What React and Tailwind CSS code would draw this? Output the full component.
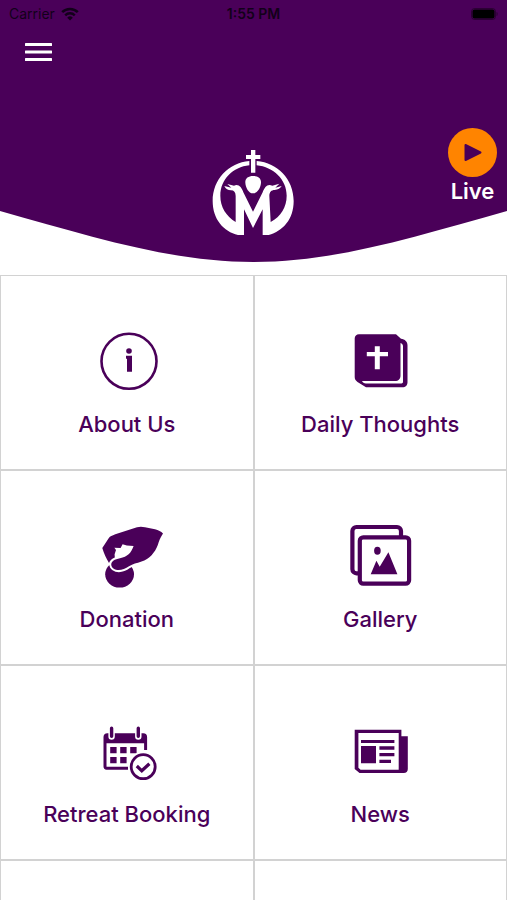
/**
 * Home Screen
 *
 * Curved header with the logo and live button, followed by the menu tiles.
 */

import React from "react";

function WifiIcon() {
  return (
    <svg viewBox="0 0 18 14" className="w-[18px] h-[14px]" fill="none" stroke="currentColor">
      <path d="M1.2 5.2a11 11 0 0 1 15.6 0" strokeWidth="2.6" />
      <path d="M4.2 8.3a6.8 6.8 0 0 1 9.6 0" strokeWidth="2.4" />
      <path d="M9 13.6 6.2 10.7a4 4 0 0 1 5.6 0z" fill="currentColor" stroke="none" />
    </svg>
  );
}

function BatteryIcon() {
  return (
    <svg viewBox="0 0 27 12" className="w-[27px] h-3 text-black">
      <rect x="0.5" y="0.5" width="24" height="11" rx="3" fill="none" stroke="currentColor" strokeOpacity="0.4" />
      <rect x="1.5" y="1.5" width="22" height="9" rx="2" fill="currentColor" />
      <path d="M25.5 4v4c1-.4 1.2-1.2 1.2-2s-.2-1.6-1.2-2z" fill="currentColor" fillOpacity="0.4" />
    </svg>
  );
}

function Logo() {
  return (
    <svg viewBox="29 24 264 264" className="w-[88px] h-[88px] text-white" fill="currentColor">
      {/* Ring, open at the bottom between the legs of the M */}
      <path d="M150 63C88 68 40 118 40 183c0 55 33 92 76 102h18v-77l27 56 29-56v77h18c43-12 75-47 75-102 0-65-48-115-111-120v13c50 5 90 42 90 91 0 34-17 62-48 79L210 168C210 156 216 150 226 150C236 149 243 145 247 138L228 143L240 131L219 137C205 130 196 140 190 157L161 215L132 157C127 140 116 130 104 137L84 132L96 143L75 138C79 147 86 151 95 151C104 151 109 157 109 168V246c-29-18-46-45-46-79 0-49 38-86 87-91z" />
      <path d="M155 30h13v15h15v12h-15v41h-13V57h-15V45h15z" />
      <path d="M161 108c14 0 25 7 24 20-1 15-11 32-24 32s-22-17-23-32c-1-13 9-20 23-20z" />
    </svg>
  );
}

function AboutIcon() {
  return (
    <>
      <circle cx="34" cy="32.3" r="27.5" fill="none" stroke="currentColor" strokeWidth="2.6" />
      <circle cx="34" cy="22" r="2.8" />
      <path d="M31 26.8h6v16h-5v-13h-1z" />
    </>
  );
}

function BibleIcon() {
  return (
    <>
      <path d="M11 5.300h37l5 4.500c4 .5 6.500 3 6.500 6.500v37c0 3-2 5-5 5H18L9.500 53C7.500 51.500 6.700 50 6.700 48V9.500c0-2.500 1.800-4.200 4.300-4.200z" />
      <path
        d="M53.500 14.500c1 .6 1.500 1.500 1.500 2.800v35.500c0 1-.7 1.600-1.600 1.600H18c-2 0-3.300-1-4-2.400h33c3.500 0 5.500-2 5.500-5.500V14z"
        fill="white"
      />
      <path d="M26.800 17.300h5V23H40v4.300h-8.200v13h-5v-13h-8V23h8z" fill="white" />
    </>
  );
}

function DonationIcon() {
  return (
    <>
      <ellipse cx="24.600" cy="50.300" rx="14.400" ry="13.200" />
      <path
        d="M7.300 24 14 13.800c1-1.500 3-2.200 6.300-3.500L42 3.200c3-.8 5-.7 8 0L60 5.200c3.500.8 6 2.200 8 4.300-3 4.500-4 7.500-5.200 11.500C60 28.500 54.500 35 46.500 37.500c-5 1.800-8.500 2.300-12.500 4.700-4 3-9 4.600-13 3.600-4-1.100-5.500-4.500-4.400-7 1.400-2.900 4.400-3.800 8.400-4.600 7.500-1.500 11-5 13.600-12.200L31.800 21.500l-4.200-1.200-2 3.700-6.200-.2 1.600 2.200-1.400 4.300.2 3.200c-3 1-4.800 3-5.800 5.500C11 34 9 29.500 7.300 24z"
        stroke="white"
        strokeWidth="4"
        strokeLinejoin="round"
        paintOrder="stroke"
      />
    </>
  );
}

function GalleryIcon() {
  return (
    <>
      <path
        d="M10 49.300H8.400c-2.200 0-4-1.800-4-4V7c0-2.200 1.800-4 4-4H49c2.200 0 4 1.800 4 4v5"
        fill="none"
        stroke="currentColor"
        strokeWidth="4.2"
      />
      <rect x="11.800" y="13.300" width="49.300" height="46.400" rx="3.500" fill="white" stroke="currentColor" strokeWidth="4.200" />
      <ellipse cx="29.400" cy="26.700" rx="3.300" ry="4" />
      <path d="m22.700 50.300 5.700-13.600 3.300 6.100 8.700-14.500 9 22z" />
    </>
  );
}

function BookingIcon() {
  return (
    <>
      <path
        d="M33 49.200H11.600a1.600 1.600 0 0 1-1.600-1.600V18c0-1.500.8-2.300 2.300-2.300h36c1.500 0 2.300.8 2.300 2.300v13"
        fill="none"
        stroke="currentColor"
        strokeWidth="3"
      />
      <path d="M9 17h43v7.300H9z" />
      <path d="M16.600 9.500v8M43.300 9.500v8" stroke="white" strokeWidth="6.400" strokeLinecap="round" />
      <path d="M16.600 9.200v8M43.300 9.200v8" stroke="currentColor" strokeWidth="3.400" strokeLinecap="round" />
      <path d="M15.200 28h6.400v6.200h-6.400zM25.200 28h6.400v6.200h-6.400zM35.200 28h6.400v6.200h-6.400zM15.200 38h6.400v6.200h-6.400zM25.200 38h6.400v6.200h-6.400z" />
      <circle cx="48.200" cy="47.700" r="15" fill="white" />
      <circle cx="48.200" cy="47.700" r="12" fill="none" stroke="currentColor" strokeWidth="2.800" />
      <path d="m41.800 47 5 4.800 7.600-7" fill="none" stroke="currentColor" strokeWidth="3.200" />
    </>
  );
}

function NewsIcon() {
  return (
    <>
      <path d="M6.700 10.700h46.700v6.600h6.400V50c0 2.500-1.600 4-4 4H11.500L6.700 50z" />
      <path d="M10.400 14h40.300v36.700H12.600l-2.200-1.900z" fill="white" />
      <path d="M13 21h33.400v3H13zM13 27h15v17.300H13zM31.400 27.300h15v3.400h-15zM31.400 34h15v3.300h-15zM31.400 40.700H43V44H31.400z" />
    </>
  );
}

const tiles = [
  { label: "About Us", icon: AboutIcon },
  { label: "Daily Thoughts", icon: BibleIcon },
  { label: "Donation", icon: DonationIcon },
  { label: "Gallery", icon: GalleryIcon },
  { label: "Retreat Booking", icon: BookingIcon },
  { label: "News", icon: NewsIcon },
];

function Tile({ label, icon: Icon }) {
  return (
    <button
      type="button"
      className="h-[195px] pt-[53px] flex flex-col items-center gap-[17px] border border-[#d2d2d2]"
    >
      <svg viewBox="0 0 64 64" className="w-16 h-16 overflow-visible" fill="currentColor">
        <Icon />
      </svg>
      <span className="text-[22px] leading-7 font-medium">{label}</span>
    </button>
  );
}

export default function App() {
  return (
    <div className="h-screen overflow-hidden bg-white text-[#4a0059] font-[Inter,'Liberation_Sans',sans-serif]">
      {/* Header */}
      <header className="relative pb-[26px]">
        <svg viewBox="0 0 507 262" preserveAspectRatio="none" className="absolute inset-0 w-full h-full">
          <path d="M0 0h507v211C417 236 337 262 253.500 262S90 236 0 211z" fill="#4a0059" />
        </svg>

        <div className="relative">
          {/* Status bar */}
          <div className="h-7 px-[9px] grid grid-cols-3 items-center text-[#12001a] text-sm">
            <div className="flex items-center gap-1.5">
              <span>Carrier</span>
              <WifiIcon />
            </div>
            <span className="text-center font-semibold">1:55 PM</span>
            <div className="flex justify-end">
              <BatteryIcon />
            </div>
          </div>

          {/* Menu */}
          <div className="h-[100px] px-[25px] pt-[15px]">
            <button type="button" aria-label="Menu" className="block text-white">
              <svg viewBox="0 0 27 18" className="w-[27px] h-[18px]" fill="currentColor">
                <rect width="27" height="3" rx="0.5" />
                <rect y="7.5" width="27" height="3" rx="0.5" />
                <rect y="15" width="27" height="3" rx="0.5" />
              </svg>
            </button>
          </div>

          {/* Logo and live stream */}
          <div className="px-[10px] grid grid-cols-3 items-start">
            <div className="col-start-2 pt-5 flex justify-center">
              <Logo />
            </div>
            <button type="button" className="justify-self-end flex flex-col items-center">
              <svg viewBox="0 0 49 49" className="w-[49px] h-[49px]">
                <circle cx="24.5" cy="24.5" r="24.5" fill="#ff8400" />
                <path
                  d="M17.500 17v15L32.500 24.500z"
                  fill="#4a0059"
                  stroke="#4a0059"
                  strokeWidth="2"
                  strokeLinejoin="round"
                />
              </svg>
              <span className="text-[22px] leading-7 font-semibold text-white">Live</span>
            </button>
          </div>
        </div>
      </header>

      {/* Tiles */}
      <main className="mt-[13px] grid grid-cols-2">
        {tiles.map((tile) => (
          <Tile key={tile.label} {...tile} />
        ))}
        <div className="h-[195px] border border-[#d2d2d2]" />
        <div className="h-[195px] border border-[#d2d2d2]" />
      </main>
    </div>
  );
}
